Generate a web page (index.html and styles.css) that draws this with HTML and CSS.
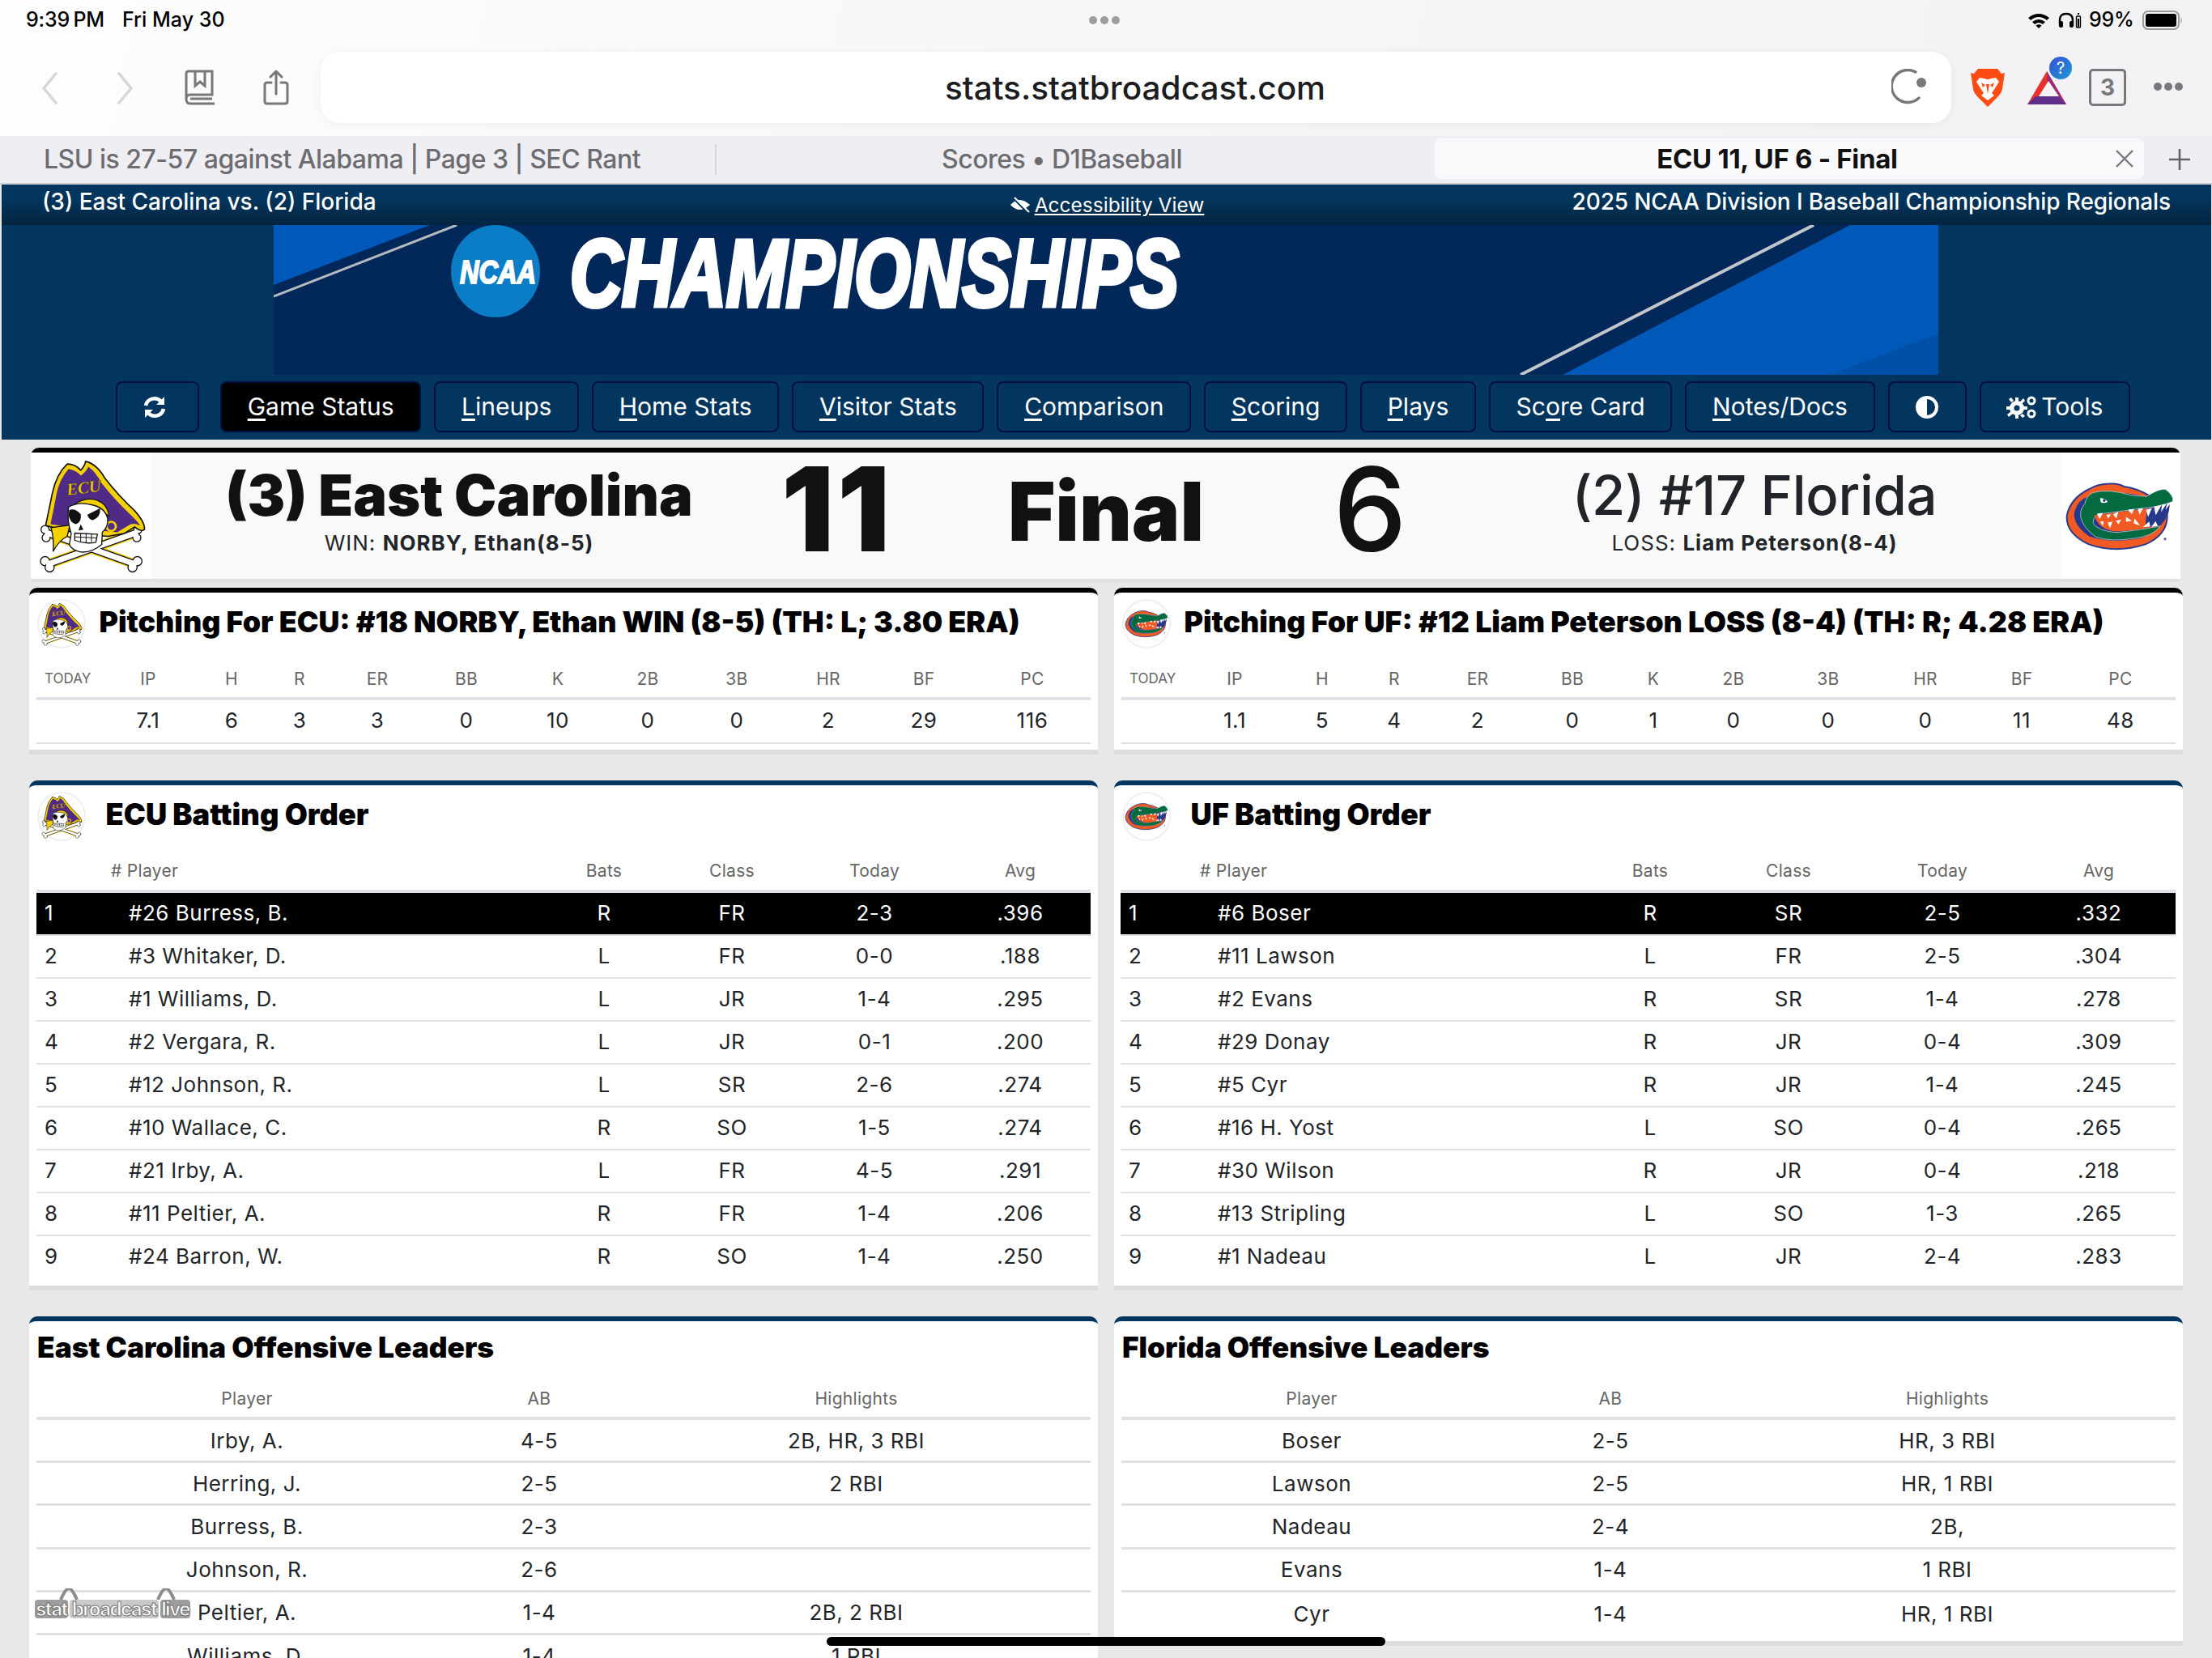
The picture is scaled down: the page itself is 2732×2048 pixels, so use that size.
FILE: index.html
```html
<!DOCTYPE html>
<html lang="en">
<head>
<meta charset="utf-8">
<title>ECU 11, UF 6 - Final</title>
<link rel="stylesheet" href="styles.css">
</head>
<body>
<svg class="defs" width="0" height="0" aria-hidden="true">
  <symbol id="ecu" viewBox="70 35 420 440">
    <g stroke-linecap="round" stroke-linejoin="round">
      <g fill="none">
        <path d="M118 318 L438 432" stroke="#f5d000" stroke-width="36"/>
        <path d="M442 318 L122 432" stroke="#f5d000" stroke-width="36"/>
        <path d="M118 318 L438 432" stroke="#111" stroke-width="28"/>
        <path d="M442 318 L122 432" stroke="#111" stroke-width="28"/>
      </g>
      <g fill="#fff" stroke="#111" stroke-width="4">
        <circle cx="108" cy="305" r="15"/><circle cx="112" cy="335" r="15"/>
        <circle cx="452" cy="305" r="15"/><circle cx="448" cy="335" r="15"/>
        <circle cx="108" cy="422" r="17"/><circle cx="125" cy="445" r="17"/>
        <circle cx="450" cy="422" r="17"/><circle cx="432" cy="445" r="17"/>
      </g>
      <g fill="none">
        <path d="M118 318 L438 432" stroke="#fff" stroke-width="21"/>
        <path d="M442 318 L122 432" stroke="#fff" stroke-width="21"/>
      </g>
      <path d="M190 62 Q220 62 240 85 Q255 70 258 52 Q300 62 330 115 Q380 180 440 235 Q480 280 476 305 Q465 315 440 295 L400 320 L340 330 L230 320 L110 290 Q125 220 135 170 Q150 100 190 62Z" fill="#f5d000" stroke="#111" stroke-width="5"/>
      <path d="M195 80 Q225 85 240 105 Q262 90 268 72 Q295 90 315 130 Q370 200 430 255 Q455 280 460 290 Q440 280 425 285 L375 315 L230 300 L128 285 Q140 230 150 175 Q160 120 195 80Z" fill="#4f2a87"/>
      <path d="M130 298 L200 288 L190 330 Q160 345 138 385 Q142 340 130 298Z" fill="#f5d000" stroke="#111" stroke-width="4"/>
      <circle cx="353" cy="293" r="17" fill="none" stroke="#f5d000" stroke-width="8"/>
      <path d="M216 212 Q270 175 318 205 Q342 225 345 255 L300 225 Z" fill="#f5d000" stroke="#111" stroke-width="4"/>
      <path d="M195 222 Q230 200 280 213 Q330 222 340 265 Q342 295 320 315 L318 360 Q280 392 240 388 Q205 380 198 360 L205 320 Q188 270 195 222Z" fill="#fff" stroke="#111" stroke-width="4"/>
      <path d="M198 232 Q220 225 240 248 Q245 275 222 285 Q200 280 195 250Z" fill="#111"/>
      <path d="M265 250 L312 226 Q315 260 285 270 Q268 268 265 250Z" fill="#111"/>
      <path d="M240 285 L250 305 L232 308Z" fill="#111"/>
      <path d="M218 318 L302 322 L296 352 Q255 360 218 345Z" fill="#fff" stroke="#111" stroke-width="4"/>
      <path d="M240 320 V350 M260 320 V352 M280 322 V350 M218 332 L300 336" stroke="#111" stroke-width="3" fill="none"/>
    </g>
    <text x="190" y="178" class="ecu-text" transform="rotate(-7 190 178)" textLength="128" lengthAdjust="spacingAndGlyphs">ECU</text>
  </symbol>
  <symbol id="gator" viewBox="90 65 415 260">
    <path d="M180 95 Q215 75 255 75 Q290 72 310 85 Q410 100 470 180 Q480 260 390 300 Q280 335 180 300 Q95 260 98 195 Q110 130 180 95Z" fill="#f15a22" stroke="#2a3a8e" stroke-width="6"/>
    <path d="M160 130 Q250 90 400 125 L478 150 Q470 240 380 275 Q270 300 180 270 Q125 230 125 190 Q130 150 160 130Z" fill="#26388c"/>
    <path d="M195 108 Q250 92 340 118 L395 122 Q440 92 465 96 Q495 118 492 140 Q470 150 425 160 L350 170 L290 178 L215 188 Q194 200 196 222 Q215 250 280 256 Q350 250 445 232 Q420 270 345 278 Q260 292 205 272 Q160 240 150 200 Q145 170 165 150 Q170 120 195 108Z" fill="#036b3f" stroke="#dfe3ee" stroke-width="2"/>
    <path d="M200 192 L290 180 L420 164 L480 152 Q480 200 445 230 Q350 250 280 252 Q215 245 200 192Z" fill="#f15a22"/>
    <path d="M395 170 L480 152 Q478 200 445 230 L390 236Z" fill="#26388c"/>
    <path d="M210 186 L232 183 L220 206Z M245 190 L262 188 L252 204Z M270 188 L290 178 L282 204Z M325 172 L348 168 L340 188Z M362 168 L382 166 L368 190Z M392 172 L414 166 L400 198Z M422 160 L450 154 L428 192Z M452 152 L468 150 L448 180Z M470 150 L484 146 L465 172Z M222 215 L235 214 L232 232Z M250 218 L268 216 L258 240Z M280 212 L300 208 L290 226Z M318 198 L340 212 L318 216Z M350 204 L370 230 L346 222Z M380 236 L404 215 L408 234Z M412 235 L428 214 L436 232Z" fill="#fff"/>
    <path d="M222 128 Q240 128 250 142 Q232 150 224 142Z" fill="#fff"/>
    <circle cx="237" cy="137" r="5" fill="#26388c"/>
    <circle cx="463" cy="280" r="5" fill="#5a68a8"/>
  </symbol>
</svg>

<div class="page">
  <header class="chrome">
    <div class="status">
      <span class="status-time">9:39 PM</span><span class="status-date">Fri May 30</span>
      <span class="status-dots"><i></i><i></i><i></i></span>
      <div class="status-right">
        <svg class="i-wifi" viewBox="0 0 28 20"><path d="M1 7 Q14 -3 27 7 L24 10 Q14 2 4 10Z M6 12 Q14 6 22 12 L19 15 Q14 11 9 15Z M10.500 16.500 Q14 14 17.500 16.500 L14 20Z" fill="#000"/></svg>
        <svg class="i-head" viewBox="0 0 30 20"><path d="M2 16 V10 Q2 2 10 2 Q18 2 18 10 V16" fill="none" stroke="#000" stroke-width="2.400"/><rect x="1" y="11" width="5" height="8" rx="2" fill="#000"/><rect x="14" y="11" width="5" height="8" rx="2" fill="#000"/><rect x="22.500" y="5" width="5" height="14" rx="1" fill="none" stroke="#000" stroke-width="1.400"/><rect x="24" y="8" width="2" height="10" fill="#000"/><rect x="24" y="1" width="2" height="2" fill="#000"/></svg>
        <span class="status-pct">99%</span>
        <svg class="i-batt" viewBox="0 0 50 24"><rect x="1" y="1" width="44" height="22" rx="6" fill="none" stroke="#9a9a9a" stroke-width="2"/><rect x="4" y="4" width="38" height="16" rx="3" fill="#000"/><path d="M47.500 8 Q50 12 47.500 16Z" fill="#9a9a9a"/></svg>
      </div>
    </div>
    <div class="toolbar">
      <svg class="i-nav" viewBox="0 0 20 40"><path d="M18 2 L3 20 L18 38" fill="none" stroke="#d5d6da" stroke-width="3.500" stroke-linecap="round" stroke-linejoin="round"/></svg>
      <svg class="i-nav i-fwd" viewBox="0 0 20 40"><path d="M2 2 L17 20 L2 38" fill="none" stroke="#d5d6da" stroke-width="3.500" stroke-linecap="round" stroke-linejoin="round"/></svg>
      <svg class="i-book" viewBox="0 0 40 44"><g fill="none" stroke="#77777c" stroke-width="3"><path d="M3 36 V5 Q3 2 6 2 H35 V31 H8 Q3 31 3 36 Q3 42 8 42 H38"/><path d="M35 36 H8"/><path d="M14 2 V20 L20 15 L26 20 V2"/></g></svg>
      <svg class="i-share" viewBox="0 0 32 44"><g fill="none" stroke="#77777c" stroke-width="3" stroke-linecap="round" stroke-linejoin="round"><path d="M16 30 V3 M9 9 L16 2 L23 9"/><path d="M10 16 H5 Q2 16 2 19 V39 Q2 42 5 42 H27 Q30 42 30 39 V19 Q30 16 27 16 H22"/></g></svg>
      <div class="url"><span class="url-text">stats.statbroadcast.com</span>
        <svg class="i-reload" viewBox="0 0 44 44"><path d="M34 36 A20 20 0 1 1 30 4" fill="none" stroke="#77777c" stroke-width="3.400" stroke-linecap="round"/><circle cx="37" cy="17" r="6" fill="#77777c"/></svg>
      </div>
      <svg class="i-brave" viewBox="0 0 42 48"><path d="M9 1 H33 L38 7 L42 6 L39 26 Q38 31 33 36 L21 48 L9 36 Q4 31 3 26 L0 6 L4 7Z" fill="#fb4a12"/><path d="M11 12 L17 13 Q21 15 25 13 L31 12 L35 17 L30 25 L26 31 L29 34 L21 40 L13 34 L16 31 L12 25 L7 17Z" fill="#fff"/><path d="M19 20 L21 32 L23 20 Z M13 18 L18 21 L15 24Z M29 18 L24 21 L27 24Z" fill="#fb4a12"/></svg>
      <div class="bat">
        <svg class="i-bat" viewBox="0 0 48 42"><path d="M24 0 L48 41 H0Z" fill="#e8322e"/><path d="M24 0 L48 41 H40 L24 12Z" fill="#9c2a78"/><path d="M10 31 H38 L48 41 H0Z" fill="#5f2d8c"/><path d="M26 12 L39 31 H14Z" fill="#f4f4f6"/></svg>
        <span class="bat-badge">?</span>
      </div>
      <span class="tabcount">3</span>
      <span class="more"><i></i><i></i><i></i></span>
    </div>
    <div class="tabs">
      <span class="tab">LSU is 27-57 against Alabama | Page 3 | SEC Rant</span>
      <span class="tab tab-mid">Scores • D1Baseball</span>
      <div class="tab-active"><b>ECU 11, UF 6 - Final</b>
        <svg class="i-x" viewBox="0 0 22 22"><path d="M1 1 L21 21 M21 1 L1 21" stroke="#77777c" stroke-width="2.400"/></svg>
      </div>
      <svg class="i-plus" viewBox="0 0 26 26"><path d="M13 0 V26 M0 13 H26" stroke="#636368" stroke-width="2.600"/></svg>
    </div>
  </header>

  <section class="site">
    <div class="site-top">
      <span>(3) East Carolina vs. (2) Florida</span>
      <a class="a11y"><svg class="i-eye" viewBox="0 0 26 20"><path d="M1 10 Q12 -2 25 10 Q12 22 1 10Z" fill="#fff"/><path d="M4 1 L22 19" stroke="#03365f" stroke-width="3"/><path d="M6 1 L24 19" stroke="#fff" stroke-width="2"/></svg>Accessibility View</a>
      <span class="site-event">2025 NCAA Division I Baseball Championship Regionals</span>
    </div>
    <svg class="banner" viewBox="0 0 2056 185" preserveAspectRatio="none">
      <rect width="2056" height="185" fill="#02285a"/>
      <path d="M0 0 H193 L0 74Z" fill="#0059b8"/>
      <path d="M0 88 L226 0" stroke="#b5b9c0" stroke-width="3"/>
      <path d="M1592 185 L1947 0 H2056 V185Z" fill="#0059b8"/>
      <path d="M1922 185 L2056 134 V185Z" fill="#0050a8"/>
      <path d="M1540 185 L1902 0" stroke="#c2c5ca" stroke-width="4"/>
      <ellipse cx="274" cy="57" rx="55" ry="57" fill="#0a7dc6"/>
      <text x="230" y="72" class="ban-ncaa" textLength="94" lengthAdjust="spacingAndGlyphs">NCAA</text>
      <text x="366" y="100" class="ban-champ" textLength="752" lengthAdjust="spacingAndGlyphs">CHAMPIONSHIPS</text>
    </svg>
    <nav class="nav">
      <a class="btn btn-icon btn-refresh"><svg class="i-sync" viewBox="0 0 30 30"><g fill="none" stroke="#fff" stroke-width="4.500"><path d="M4 13 A11 11 0 0 1 23 8"/><path d="M26 17 A11 11 0 0 1 7 22"/></g><path d="M27 2 V12 H17Z M3 28 V18 H13Z" fill="#fff"/></svg></a>
      <a class="btn btn-active"><u>G</u>ame Status</a>
      <a class="btn"><u>L</u>ineups</a>
      <a class="btn"><u>H</u>ome Stats</a>
      <a class="btn"><u>V</u>isitor Stats</a>
      <a class="btn"><u>C</u>omparison</a>
      <a class="btn"><u>S</u>coring</a>
      <a class="btn"><u>P</u>lays</a>
      <a class="btn">Sc<u>o</u>re Card</a>
      <a class="btn"><u>N</u>otes/Docs</a>
      <a class="btn btn-icon btn-contrast"><svg class="i-contrast" viewBox="0 0 30 30"><circle cx="15" cy="15" r="14" fill="#fff"/><path d="M15 5 A10 10 0 0 1 15 25Z" fill="#03365f"/></svg></a>
      <a class="btn btn-tools"><svg class="i-cogs" viewBox="0 0 38 30"><g fill="#fff"><circle cx="13" cy="16" r="9"/><path d="M11 3 H15 V8 H11Z M11 24 H15 V29 H11Z M0 14 H5 V18 H0Z M21 14 H26 V18 H21Z M3 5 L6 3 L9 7 L6 9Z M17 25 L20 23 L23 26 L20 28Z M3 27 L1 24 L6 20 L8 23Z M18 12 L16 9 L21 4 L23 7Z"/></g><circle cx="13" cy="16" r="3.500" fill="#03365f"/><circle cx="31" cy="7" r="4" fill="none" stroke="#fff" stroke-width="3"/><circle cx="31" cy="23" r="4" fill="none" stroke="#fff" stroke-width="3"/></svg>Tools</a>
    </nav>
  </section>

  <main class="content">
    <section class="score">
      <div class="score-logo"><svg class="logo-big"><use href="#ecu"/></svg></div>
      <div class="team team-l">
        <div class="team-name team-win">(3) East Carolina</div>
        <div class="team-note">WIN: <b>NORBY, Ethan(8-5)</b></div>
      </div>
      <div class="score-num score-win">11</div>
      <div class="score-final">Final</div>
      <div class="score-num">6</div>
      <div class="team team-r">
        <div class="team-name">(2) #17 Florida</div>
        <div class="team-note">LOSS: <b>Liam Peterson(8-4)</b></div>
      </div>
      <div class="score-logo"><svg class="logo-gator"><use href="#gator"/></svg></div>
    </section>

    <div class="columns row-pitch">
      <section class="card card-black">
        <div class="card-head"><span class="badge"><svg><use href="#ecu"/></svg></span><h2 class="title-pitch">Pitching For ECU: #18 NORBY, Ethan WIN (8-5) (TH: L; 3.80 ERA)</h2></div>
        <div class="pitch-table pl">
          <div class="g pitch-hd"><span class="today">TODAY</span><span>IP</span><span>H</span><span>R</span><span>ER</span><span>BB</span><span>K</span><span>2B</span><span>3B</span><span>HR</span><span>BF</span><span>PC</span></div>
          <div class="g pitch-row"><span></span><span>7.1</span><span>6</span><span>3</span><span>3</span><span>0</span><span>10</span><span>0</span><span>0</span><span>2</span><span>29</span><span>116</span></div>
        </div>
      </section>
      <section class="card card-black">
        <div class="card-head"><span class="badge"><svg class="badge-gator"><use href="#gator"/></svg></span><h2 class="title-pitch">Pitching For UF: #12 Liam Peterson LOSS (8-4) (TH: R; 4.28 ERA)</h2></div>
        <div class="pitch-table pr">
          <div class="g pitch-hd"><span class="today">TODAY</span><span>IP</span><span>H</span><span>R</span><span>ER</span><span>BB</span><span>K</span><span>2B</span><span>3B</span><span>HR</span><span>BF</span><span>PC</span></div>
          <div class="g pitch-row"><span></span><span>1.1</span><span>5</span><span>4</span><span>2</span><span>0</span><span>1</span><span>0</span><span>0</span><span>0</span><span>11</span><span>48</span></div>
        </div>
      </section>
    </div>

    <div class="columns row-bat">
      <section class="card">
        <div class="card-head"><span class="badge"><svg><use href="#ecu"/></svg></span><h2 class="title-bat">ECU Batting Order</h2></div>
        <div class="bat-table bl">
          <div class="g bat-hd"><span class="hd-player"># Player</span><span>Bats</span><span>Class</span><span>Today</span><span>Avg</span></div>
          <div class="g bat-row bat-now"><span>1</span><span>#26 Burress, B.</span><span>R</span><span>FR</span><span>2-3</span><span>.396</span></div>
          <div class="g bat-row"><span>2</span><span>#3 Whitaker, D.</span><span>L</span><span>FR</span><span>0-0</span><span>.188</span></div>
          <div class="g bat-row"><span>3</span><span>#1 Williams, D.</span><span>L</span><span>JR</span><span>1-4</span><span>.295</span></div>
          <div class="g bat-row"><span>4</span><span>#2 Vergara, R.</span><span>L</span><span>JR</span><span>0-1</span><span>.200</span></div>
          <div class="g bat-row"><span>5</span><span>#12 Johnson, R.</span><span>L</span><span>SR</span><span>2-6</span><span>.274</span></div>
          <div class="g bat-row"><span>6</span><span>#10 Wallace, C.</span><span>R</span><span>SO</span><span>1-5</span><span>.274</span></div>
          <div class="g bat-row"><span>7</span><span>#21 Irby, A.</span><span>L</span><span>FR</span><span>4-5</span><span>.291</span></div>
          <div class="g bat-row"><span>8</span><span>#11 Peltier, A.</span><span>R</span><span>FR</span><span>1-4</span><span>.206</span></div>
          <div class="g bat-row"><span>9</span><span>#24 Barron, W.</span><span>R</span><span>SO</span><span>1-4</span><span>.250</span></div>
        </div>
      </section>
      <section class="card">
        <div class="card-head"><span class="badge"><svg class="badge-gator"><use href="#gator"/></svg></span><h2 class="title-bat">UF Batting Order</h2></div>
        <div class="bat-table br">
          <div class="g bat-hd"><span class="hd-player"># Player</span><span>Bats</span><span>Class</span><span>Today</span><span>Avg</span></div>
          <div class="g bat-row bat-now"><span>1</span><span>#6 Boser</span><span>R</span><span>SR</span><span>2-5</span><span>.332</span></div>
          <div class="g bat-row"><span>2</span><span>#11 Lawson</span><span>L</span><span>FR</span><span>2-5</span><span>.304</span></div>
          <div class="g bat-row"><span>3</span><span>#2 Evans</span><span>R</span><span>SR</span><span>1-4</span><span>.278</span></div>
          <div class="g bat-row"><span>4</span><span>#29 Donay</span><span>R</span><span>JR</span><span>0-4</span><span>.309</span></div>
          <div class="g bat-row"><span>5</span><span>#5 Cyr</span><span>R</span><span>JR</span><span>1-4</span><span>.245</span></div>
          <div class="g bat-row"><span>6</span><span>#16 H. Yost</span><span>L</span><span>SO</span><span>0-4</span><span>.265</span></div>
          <div class="g bat-row"><span>7</span><span>#30 Wilson</span><span>R</span><span>JR</span><span>0-4</span><span>.218</span></div>
          <div class="g bat-row"><span>8</span><span>#13 Stripling</span><span>L</span><span>SO</span><span>1-3</span><span>.265</span></div>
          <div class="g bat-row"><span>9</span><span>#1 Nadeau</span><span>L</span><span>JR</span><span>2-4</span><span>.283</span></div>
        </div>
      </section>
    </div>

    <div class="columns row-off">
      <section class="card card-open">
        <h2 class="title-off">East Carolina Offensive Leaders</h2>
        <div class="off-table ol">
          <div class="g off-hd"><span>Player</span><span>AB</span><span>Highlights</span></div>
          <div class="g off-row"><span>Irby, A.</span><span>4-5</span><span>2B, HR, 3 RBI</span></div>
          <div class="g off-row"><span>Herring, J.</span><span>2-5</span><span>2 RBI</span></div>
          <div class="g off-row"><span>Burress, B.</span><span>2-3</span><span></span></div>
          <div class="g off-row"><span>Johnson, R.</span><span>2-6</span><span></span></div>
          <div class="g off-row"><span>Peltier, A.</span><span>1-4</span><span>2B, 2 RBI</span></div>
          <div class="g off-row"><span>Williams, D.</span><span>1-4</span><span>1 RBI</span></div>
        </div>
      </section>
      <section class="card card-short">
        <h2 class="title-off">Florida Offensive Leaders</h2>
        <div class="off-table or">
          <div class="g off-hd"><span>Player</span><span>AB</span><span>Highlights</span></div>
          <div class="g off-row"><span>Boser</span><span>2-5</span><span>HR, 3 RBI</span></div>
          <div class="g off-row"><span>Lawson</span><span>2-5</span><span>HR, 1 RBI</span></div>
          <div class="g off-row"><span>Nadeau</span><span>2-4</span><span>2B,</span></div>
          <div class="g off-row"><span>Evans</span><span>1-4</span><span>1 RBI</span></div>
          <div class="g off-row off-last"><span>Cyr</span><span>1-4</span><span>HR, 1 RBI</span></div>
        </div>
      </section>
    </div>
  </main>

  <div class="watermark">
    <svg class="wm-arcs" viewBox="0 0 193 14"><path d="M32 14 Q38 0 42 0 Q46 0 52 14 M152 14 Q158 0 162 0 Q166 0 172 14" fill="none" stroke="#8c8c8c" stroke-width="4"/></svg>
    <span class="wm-box">stat</span><span class="wm-box wm-mid">broadcast</span><span class="wm-box">live</span>
  </div>
  <div class="home"></div>
</div>
</body>
</html>
```
FILE: styles.css
```css
* { box-sizing: border-box; }
html, body { margin: 0; padding: 0; }
body { font-family: Inter, "Noto Sans", sans-serif; color: #212529; background: #e8e8e8; }
.defs { position: absolute; }
.page { width: 2732px; height: 2048px; overflow: hidden; position: relative; background: #e8e8e8; }

/* browser chrome */
.chrome { height: 228px; background: linear-gradient(100deg, #fdfdfd 0, #f6f6f7 55%, #f2f2f4 100%); }
.status { height: 64px; display: flex; align-items: flex-start; padding: 10px 36px 0 32px; position: relative; font-size: 25px; font-weight: 500; color: #000; line-height: 29px; }
.status-time { width: 119px; letter-spacing: -0.2px; word-spacing: -2px; }
.status-date { letter-spacing: 0; }
.status-dots { position: absolute; left: 1345px; top: 20px; display: flex; gap: 4px; }
.status-dots i { width: 10px; height: 10px; border-radius: 50%; background: #9c9ca1; }
.status-right { margin-left: auto; display: flex; align-items: center; }
.i-wifi { width: 28px; height: 20px; margin-right: 10px; }
.i-head { width: 30px; height: 20px; margin-right: 8px; }
.status-pct { width: 66px; letter-spacing: -0.3px; }
.i-batt { width: 50px; height: 24px; }

.toolbar { height: 104px; display: flex; align-items: flex-start; position: relative; padding-left: 51px; }
.i-nav { width: 20px; height: 40px; margin-top: 25px; }
.i-fwd { margin-left: 74px; }
.i-book { width: 40px; height: 44px; margin: 22px 0 0 62px; }
.i-share { width: 32px; height: 44px; margin: 22px 0 0 58px; }
.url { width: 2014px; height: 88px; margin-left: 39px; background: #fff; border-radius: 24px; box-shadow: 0 2px 12px rgba(0,0,0,.05); display: flex; align-items: center; justify-content: center; position: relative; }
.url-text { font-size: 40.500px; font-weight: 500; color: #1d1d1f; position: relative; left: -1px; }
.i-reload { position: absolute; right: 30px; top: 21px; width: 44px; height: 44px; }
.i-brave { width: 42px; height: 48px; margin: 20px 0 0 24px; }
.bat { width: 48px; height: 42px; margin: 24px 0 0 28px; position: relative; }
.i-bat { width: 48px; height: 42px; display: block; }
.bat-badge { position: absolute; left: 27px; top: -18px; width: 28px; height: 28px; border-radius: 50%; background: linear-gradient(135deg, #3b4ed0, #1a9ad6); color: #fff; font-size: 20px; line-height: 28px; text-align: center; }
.tabcount { width: 46px; height: 46px; margin: 21px 0 0 28px; border: 3px solid #77777c; border-radius: 5px; color: #77777c; font-size: 28px; font-weight: 700; line-height: 40px; text-align: center; }
.more { display: flex; gap: 3px; margin: 38px 0 0 34px; }
.more i { width: 10px; height: 10px; border-radius: 50%; background: #77777c; }

.tabs { height: 60px; background: #eeeef3; display: flex; align-items: center; border-bottom: 2px solid #c9ced3; position: relative; }
.tab { width: 885px; height: 38px; line-height: 38px; padding-left: 54px; font-size: 32px; font-weight: 500; color: #6c6c71; border-right: 2px solid #d6d7dc; white-space: nowrap; letter-spacing: -0.5px; }
.tab-mid { width: 853px; margin-right: 34px; border: 0; padding: 0; text-align: center; }
.tab-active { width: 876px; height: 50px; background: #f9f9fb; border-radius: 8px; position: relative; display: flex; align-items: center; justify-content: center; font-size: 33px; color: #111; padding-right: 30px; margin-top: -2px; }
.tab-active b { font-weight: 700; letter-spacing: -0.3px; }
.i-x { position: absolute; right: 13px; top: 14px; width: 22px; height: 22px; }
.i-plus { width: 26px; height: 26px; margin-left: 31px; }

/* site header */
.site { height: 315px; margin: 0 1px 0 2px; background: #03365f; }
.site-top { height: 50px; background: linear-gradient(#03365f 0, #03365f 30%, #032540 100%); display: grid; grid-template-columns: 1fr auto 1fr; padding: 0 50px 0 50px; align-items: start; color: #fff; font-size: 28px; font-weight: 500; line-height: 42px; }
.site-event { text-align: right; letter-spacing: -0.13px; }
.a11y { display: flex; align-items: center; font-size: 24.500px; font-weight: 400; text-decoration: underline; line-height: 50px; }
.i-eye { width: 28px; height: 20px; margin-right: 4px; }
.banner { display: block; width: 2056px; height: 185px; margin-left: 336px; }
.ban-ncaa { font: italic 700 40px "Liberation Sans", sans-serif; fill: #fff; stroke: #fff; stroke-width: 2px; }
.ban-champ { font: italic 700 116px "Liberation Sans", sans-serif; fill: #fff; stroke: #fff; stroke-width: 6px; stroke-linejoin: miter; }
.ecu-text { font: italic 700 62px "Liberation Serif", serif; fill: #f5d000; stroke: #111; stroke-width: 1px; }

.nav { height: 80px; padding: 8px 0 0 141px; display: flex; gap: 16px; }
.btn { height: 63px; padding: 0 31.700px; border: 2px solid #01103c; border-radius: 8px; color: #fff; font-size: 30px; line-height: 59px; white-space: nowrap; display: flex; align-items: center; }
.btn u { text-underline-offset: 4px; text-decoration-thickness: 2.500px; }
.btn-icon { justify-content: center; padding: 0; }
.btn-refresh { width: 103px; margin-right: 10px; padding-right: 8px; }
.btn-contrast { width: 97px; }
.btn-active { background: #000; }
.i-sync { width: 30px; height: 30px; }
.i-contrast { width: 30px; height: 30px; }
.i-cogs { width: 38px; height: 30px; margin-right: 5px; }

/* content */
.content { padding-top: 10px; }
.score { margin-left: 38px; width: 2655px; height: 162px; background: #f9f9f9; border-top: 6px solid #000; border-radius: 10px 10px 0 0; box-shadow: 0 4px 0 #dee0e3; display: grid; grid-template-columns: 149px 760px 174px 490px 162px 772px 148px; align-items: center; }
.score-logo { height: 156px; background: #fff; display: flex; align-items: center; justify-content: center; }
.logo-big { width: 140px; height: 147px; }
.logo-gator { width: 138px; height: 87px; }
.team { text-align: center; }
.team-r { padding-left: 16px; }
.team-name { font-size: 67px; line-height: 72px; font-weight: 500; color: #212529; letter-spacing: -0.3px; margin-top: -10px; }
.team-win { font-size: 70px; font-weight: 900; color: #111; letter-spacing: 0; }
.team-note { font-size: 26px; line-height: 34px; margin-top: 6px; letter-spacing: 1px; }
.team-note b { font-weight: 700; }
.score-num { font-size: 144px; line-height: 140px; text-align: center; font-weight: 500; color: #111; margin-top: -16px; }
.score-win { font-weight: 900; letter-spacing: 4px; }
.score-final { font-size: 100px; line-height: 120px; font-weight: 900; color: #111; text-align: center; margin-top: -10px; }

.columns { display: grid; grid-template-columns: 1320px 1320px; column-gap: 20px; margin-left: 36px; align-items: start; }
.row-pitch { margin-top: 11px; height: 238px; }
.row-bat { height: 662px; }
.card { background: #fff; border-top: 6px solid #03365f; border-radius: 10px 10px 0 0; box-shadow: 0 6px 0 #dcdcdc; }
.card-black { border-top-color: #000; height: 200px; }
.row-bat .card { height: 624px; }
.card-open { height: 500px; }
.card-short { height: 401px; }
.card-head { display: flex; align-items: flex-start; padding: 8px 0 0 10px; height: 81px; }
.badge { width: 60px; height: 61px; border: 2px solid #efefef; border-radius: 50%; display: flex; align-items: center; justify-content: center; flex: none; background: #fff; }
.badge svg { width: 54px; height: 56px; }
.badge .badge-gator { width: 55px; height: 35px; }
.title-pitch { margin: 8px 0 0 16.500px; font-size: 35.800px; line-height: 40px; font-weight: 900; color: #000; white-space: nowrap; }
.title-bat { margin: 6px 0 0 24.500px; font-size: 36.300px; line-height: 44px; font-weight: 900; color: #000; white-space: nowrap; }
.title-off { margin: 11px 0 0 10px; font-size: 35.300px; line-height: 44px; height: 44px; font-weight: 900; color: #000; white-space: nowrap; }

.g { display: grid; align-items: center; }
.g > span { text-align: center; white-space: nowrap; }

.pitch-table, .bat-table, .off-table { margin: 0 9px; }
.pl .g { grid-template-columns: 78px 120px 86px 82px 110px 110px 116px 106px 114px 112px 124px 144px; }
.pr .g { grid-template-columns: 72px 136px 80px 98px 108px 126px 74px 124px 110px 130px 108px 136px; }
.pitch-hd { height: 52px; border-bottom: 4px solid #dee2e6; font-size: 21px; letter-spacing: 0.3px; color: #666; padding-top: 2px; }
.pitch-hd .today { font-size: 17px; letter-spacing: 0; text-align: left; padding-left: 10px; }
.pitch-row { height: 54px; border-bottom: 2px solid #dee2e6; font-size: 26px; letter-spacing: 0.6px; padding-bottom: 3px; }

.bl .g { grid-template-columns: 104px 507px 180px 136px 216px 160px; }
.bat-table.br { margin-left: 8px; }
.br .g { grid-template-columns: 110px 465px 158px 184px 196px 190px; }
.bl .g > span:last-child { padding-right: 16px; }
.bat-row > span:nth-child(1), .bat-row > span:nth-child(2) { text-align: left; padding-left: 10px; }
.bat-hd { height: 52px; font-size: 21px; letter-spacing: 0.3px; color: #666; border-bottom: 4px solid #dee2e6; }
.bat-hd .hd-player { grid-column: span 2; text-align: left; }
.bl .hd-player { padding-left: 92px; }
.br .hd-player { padding-left: 98px; }
.bat-row { height: 53px; border-bottom: 2px solid #dee2e6; font-size: 26px; letter-spacing: 0.5px; padding-bottom: 2px; }
.bat-row:last-child { border-bottom-color: transparent; }
.bat-now { background: #000; color: #fff; border-bottom-color: #dee2e6; }

.ol .g { grid-template-columns: 520px 202px 581px; }
.or .g { grid-template-columns: 470px 268px 564px; }
.off-table { margin-top: 15px; }
.off-hd { height: 52px; border-bottom: 4px solid #dee2e6; font-size: 21px; letter-spacing: 0.3px; color: #666; padding-top: 2px; }
.off-row { height: 53.200px; border-bottom: 3px solid #dee2e6; font-size: 26px; letter-spacing: 0.5px; }
.off-last { border-bottom: 0; }

.watermark { position: absolute; left: 43px; top: 1976px; display: flex; font-size: 24px; font-weight: 700; line-height: 23px; color: #fff; letter-spacing: -1.600px; -webkit-text-stroke: 1px #777; }
.wm-arcs { position: absolute; left: 0; top: -14px; width: 193px; height: 14px; }
.wm-box { background: #9d9d9d; border-radius: 4px; padding: 0 1px; height: 23px; }
.wm-mid { background: #c9c9c9; margin: 0 2px; padding: 0 3px; }
.home { position: absolute; left: 1021px; top: 2022px; width: 690px; height: 11px; border-radius: 6px; background: #000; }
```
